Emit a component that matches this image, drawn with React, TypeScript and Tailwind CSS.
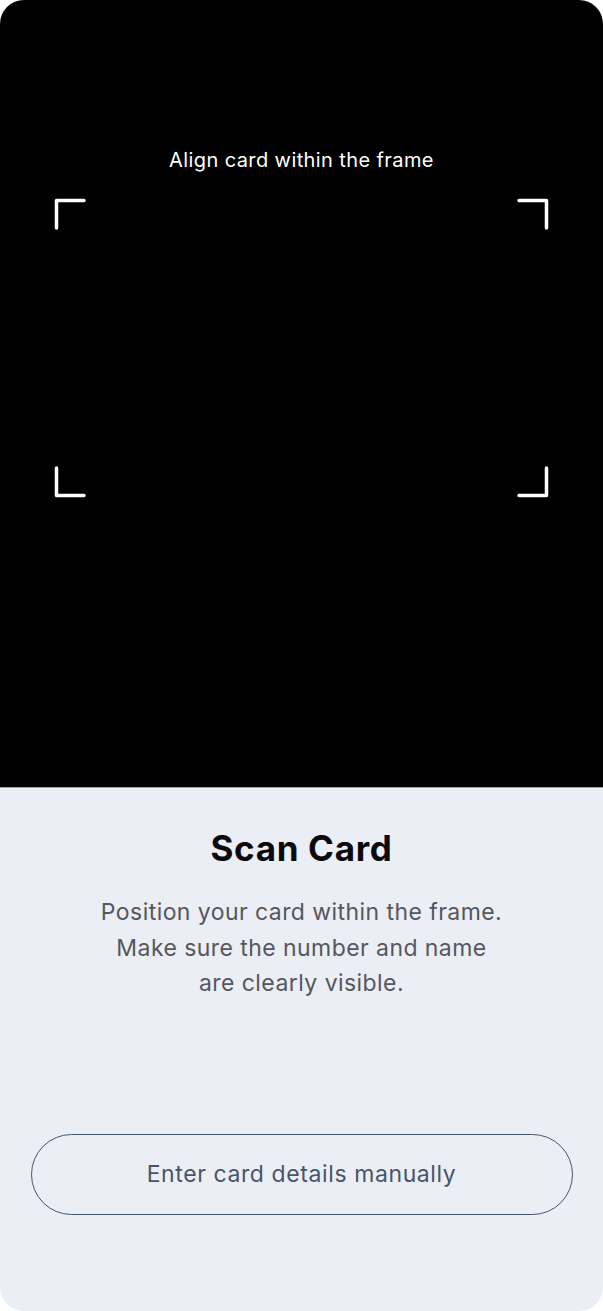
import React from 'react'

const font = { fontFamily: 'Inter, "Noto Sans", sans-serif' }

function Corner({ className, rotate }: { className: string; rotate: string }) {
  return (
    <svg
      className={`absolute w-[32px] h-[32px] ${className} ${rotate}`}
      viewBox="0 0 32 32"
      fill="none"
      stroke="white"
      strokeWidth="3.5"
      strokeLinecap="round"
      strokeLinejoin="round"
    >
      <path d="M2.5 30V2.5H30" />
    </svg>
  )
}

export default function App() {
  return (
    <div className="w-full min-h-[1311px] bg-white" style={font}>
      <div className="h-[1311px] rounded-[24px] overflow-hidden flex flex-col">
        {/* camera area */}
        <div className="h-[787px] bg-black flex flex-col items-center px-[54px] pt-[146px]">
          <p className="text-white text-[20px] leading-[28px] tracking-[0.02em]">
            Align card within the frame
          </p>
          <div className="relative w-full h-[300px] mt-[24px]">
            <Corner className="left-0 top-0" rotate="" />
            <Corner className="right-0 top-0" rotate="rotate-90" />
            <Corner className="right-0 bottom-0" rotate="rotate-180" />
            <Corner className="left-0 bottom-0" rotate="-rotate-90" />
          </div>
        </div>

        {/* info panel */}
        <div className="flex-1 bg-[#ebeef5] border-t border-[#9ca3af] flex flex-col items-center pt-[39px] pb-[96px]">
          <h1 className="text-[35px] leading-[42px] font-bold text-[#0b0b0f] tracking-[0.019em]">
            Scan Card
          </h1>
          <p className="mt-[26px] max-w-[405px] text-center text-[23px] leading-[35.5px] tracking-[0.019em] text-[#55575c]">
            Position your card within the frame. Make sure the number and name are clearly visible.
          </p>
          <button className="mt-auto w-[542px] h-[81px] rounded-full border-[1.5px] border-[#475569] text-[23px] leading-[79px] tracking-[0.026em] text-[#475569]">
            Enter card details manually
          </button>
        </div>
      </div>
    </div>
  )
}
